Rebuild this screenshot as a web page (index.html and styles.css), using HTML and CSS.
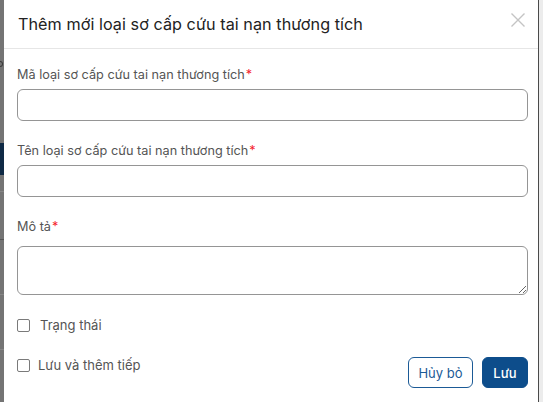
FILE: index.html
```html
<!DOCTYPE html>
<html lang="vi">
<head>
<meta charset="utf-8">
<title>Thêm mới loại sơ cấp cứu tai nạn thương tích</title>
<link rel="stylesheet" href="styles.css">
</head>
<body>
<div class="page">
  <div class="backdrop">
    <div class="bd-a"></div>
    <div class="bd-glyph"></div>
    <div class="bd-b"></div>
    <div class="bd-btn"></div>
    <div class="bd-c"></div>
    <div class="bd-line"></div>
    <div class="bd-d"></div>
    <div class="bd-line dark"></div>
    <div class="bd-e"></div>
    <div class="bd-line"></div>
    <div class="bd-f"></div>
    <div class="bd-line"></div>
    <div class="bd-g"></div>
  </div>
  <div class="modal">
    <div class="modal-header">
      <h1 class="modal-title">Thêm mới loại sơ cấp cứu tai nạn thương tích</h1>
      <svg class="close" width="16" height="16" viewBox="0 0 16 16" aria-hidden="true">
        <path d="M1.5 1.5 L14.5 14.5 M14.5 1.5 L1.5 14.5" stroke="#c4c4c4" stroke-width="1.4" fill="none"/>
      </svg>
    </div>
    <div class="modal-body">
      <div class="field">
        <label class="field-label">Mã loại sơ cấp cứu tai nạn thương tích<span class="req">*</span></label>
        <input class="input" type="text">
      </div>
      <div class="field">
        <label class="field-label">Tên loại sơ cấp cứu tai nạn thương tích<span class="req">*</span></label>
        <input class="input" type="text">
      </div>
      <div class="field">
        <label class="field-label label-desc">Mô tả<span class="req">*</span></label>
        <textarea class="textarea"></textarea>
      </div>
      <label class="check check-status"><span class="box"></span><span class="check-text">Trạng thái</span></label>
      <div class="footer">
        <label class="check"><span class="box"></span><span class="check-text tight">Lưu và thêm tiếp</span></label>
        <div class="actions">
          <button class="btn btn-outline" type="button">Hủy bỏ</button>
          <button class="btn btn-primary" type="button">Lưu</button>
        </div>
      </div>
    </div>
  </div>
  <div class="right-gap"></div>
</div>
</body>
</html>
```

FILE: styles.css
```css
* { box-sizing: border-box; }
html, body {
  margin: 0;
  padding: 0;
  width: 543px;
  height: 402px;
  overflow: hidden;
  background: #ffffff;
  font-family: Inter, "Noto Sans", "Liberation Sans", sans-serif;
}
.page {
  display: flex;
  width: 543px;
  height: 402px;
}

/* dimmed page behind the modal */
.backdrop {
  width: 4px;
  flex: none;
  background: #747474;
  display: flex;
  flex-direction: column;
  overflow: hidden;
}
.bd-a { height: 61px; }
.bd-glyph {
  height: 6px;
  width: 3px;
  border: 1px solid #3a3a3a;
  border-left: none;
  border-radius: 0 3px 3px 0;
}
.bd-b { height: 76px; }
.bd-btn { height: 32px; background: #0f2a45; }
.bd-c { height: 16px; }
.bd-line { height: 1px; background: #868686; }
.bd-line.dark { background: #555555; }
.bd-d { height: 47px; }
.bd-e { height: 54px; }
.bd-f { height: 54px; }
.bd-g { flex: 1; }

.modal {
  width: 535px;
  flex: none;
  background: #ffffff;
  border-right: 1px solid #4a4a4a;
  display: flex;
  flex-direction: column;
}
.right-gap {
  flex: 1;
  background: #ececec;
}

.modal-header {
  height: 49px;
  border-bottom: 1px solid #e6e6e6;
  display: flex;
  justify-content: space-between;
  align-items: flex-start;
  padding: 12px 12px 0 14px;
}
.modal-title {
  margin: 0;
  font-size: 16.2px;
  line-height: 24px;
  font-weight: 400;
  letter-spacing: 0.05px;
  color: #222222;
}
.close {
  flex: none;
}

.modal-body {
  padding: 16px 10px 0 13px;
  display: flex;
  flex-direction: column;
}
.field {
  display: flex;
  flex-direction: column;
  margin-bottom: 20px;
}
.field-label {
  font-size: 12.7px;
  line-height: 20px;
  color: #555555;
  margin-bottom: 4px;
}
.label-desc { margin-bottom: 9px; }
.req { color: #f5222d; margin-left: 1px; }

.input {
  height: 32px;
  width: 100%;
  border: 1px solid #959595;
  border-radius: 6px;
  background: #ffffff;
  font: inherit;
  outline: none;
}
.textarea {
  height: 49px;
  width: 100%;
  border: 1px solid #959595;
  border-radius: 6px;
  background: #ffffff;
  font: inherit;
  outline: none;
  resize: vertical;
  display: block;
}

.check {
  display: flex;
  align-items: center;
  height: 20px;
  font-size: 13px;
  line-height: 20px;
  color: #555555;
}
.box {
  width: 13px;
  height: 13px;
  border: 1px solid #7a7a7a;
  border-radius: 2px;
  background: #ffffff;
  flex: none;
}
.check-text { margin-left: 10px; }
.check-text.tight { margin-left: 8px; }

.footer {
  margin-top: 20px;
  display: flex;
  justify-content: space-between;
  align-items: flex-start;
}
.actions {
  display: flex;
  gap: 9px;
  margin-top: 2px;
}
.btn {
  height: 31px;
  border-radius: 6px;
  font-family: inherit;
  font-size: 13px;
  line-height: 20px;
  padding: 0;
  white-space: nowrap;
  cursor: pointer;
}
.btn-outline {
  width: 65px;
  background: #ffffff;
  color: #1b5a96;
  border: 1px solid #1b5a96;
}
.btn-primary {
  width: 46px;
  background: #0d4d8b;
  color: #ffffff;
  border: 1px solid #0d4d8b;
  font-weight: 500;
}
```
